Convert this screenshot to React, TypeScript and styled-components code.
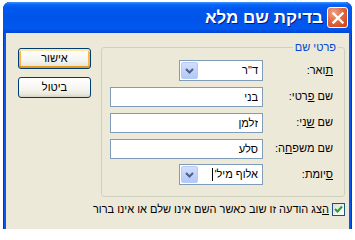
import React from 'react';
import styled, { createGlobalStyle } from 'styled-components';

const FONT = `"Liberation Sans", "DejaVu Sans", sans-serif`;

const Global = createGlobalStyle`
  html, body { margin: 0; padding: 0; background: #ffffff; }
  body {
    font-family: ${FONT};
    font-size: 11px;
    width: 355px;
    height: 229px;
    overflow: hidden;
    color: #000;
  }
  * { box-sizing: border-box; }
`;

const Window = styled.div`
  margin: 2px 0 0 3px;
  width: 349px;
  height: 240px;
  border-radius: 7px 7px 0 0;
  background: #0a55ea;
  box-shadow: inset 1px 0 0 #0831d9, inset -1px 0 0 #0831d9;
  overflow: hidden;
  display: flex;
  flex-direction: column;
`;

const TitleBar = styled.div`
  height: 31px;
  flex: none;
  direction: rtl;
  display: flex;
  align-items: center;
  gap: 4px;
  padding: 0 4px 0 0;
  background: linear-gradient(
    to bottom,
    #3d95ff 0%,
    #0a66f7 8%,
    #0058ee 20%,
    #0054e8 55%,
    #0058ef 85%,
    #0045d6 100%
  );
  border-radius: 7px 7px 0 0;
`;

const CloseButton = styled.div`
  width: 21px;
  height: 21px;
  border: 1px solid #ffffff;
  border-radius: 3px;
  background: radial-gradient(circle at 30% 25%, #f0a48a 0%, #e2683f 45%, #c9421a 100%);
  display: flex;
  align-items: center;
  justify-content: center;
`;

const TitleText = styled.div`
  font-family: ${FONT};
  font-weight: bold;
  font-size: 17px;
  color: #ffffff;
  text-shadow: 1px 1px 0 #0a1883;
  line-height: 20px;
`;

const Client = styled.div`
  flex: 1;
  margin: 0 3px;
  background: #ece9d8;
  direction: rtl;
  padding: 8px 4px 0 12px;
`;

const Top = styled.div`
  display: flex;
  align-items: flex-start;
  gap: 10px;
`;

const GroupBox = styled.fieldset`
  width: 244px;
  margin: 0;
  padding: 0 6px 11px 8px;
  border: 1px solid #d0d0bf;
  border-radius: 3px;
  min-inline-size: 0;
`;

const Legend = styled.legend`
  color: #0046d5;
  padding: 0 2px;
  line-height: 13px;
  font-size: 11px;
`;

const Fields = styled.div`
  display: grid;
  grid-template-columns: 70px 153px;
  grid-auto-rows: 21px;
  row-gap: 5px;
  padding-right: 5px;
  margin-top: 6px;
`;

const Label = styled.div`
  align-self: center;
  line-height: 13px;
  white-space: nowrap;
`;

const Cell = styled.div`
  display: flex;
  align-items: center;
`;

const TextBox = styled.input`
  width: 153px;
  height: 20px;
  border: 1px solid #7f9db9;
  background: #ffffff;
  padding: 0 4px;
  margin: 0;
  font-family: ${FONT};
  font-size: 11px;
  color: #000;
  direction: rtl;
  outline: none;
`;

const Combo = styled.div`
  width: 84px;
  height: 21px;
  border: 1px solid #7f9db9;
  background: #ffffff;
  display: flex;
  align-items: center;
  direction: rtl;
`;

const ComboText = styled.div`
  flex: 1;
  padding-right: 4px;
  line-height: 13px;
  white-space: nowrap;
  display: flex;
  align-items: center;
`;

const Caret = styled.span`
  display: inline-block;
  width: 1px;
  height: 13px;
  background: #000;
  margin-right: 1px;
`;

const DropButton = styled.div`
  width: 17px;
  height: 17px;
  margin: 0 1px 0 1px;
  border: 1px solid #b9cbf3;
  border-radius: 2px;
  background: linear-gradient(to bottom, #d3defc 0%, #c1d3fb 50%, #b4c8f6 100%);
  display: flex;
  align-items: center;
  justify-content: center;
`;

const ButtonColumn = styled.div`
  display: flex;
  flex-direction: column;
  gap: 8px;
  margin-top: 7px;
`;

const Button = styled.div<{ $default?: boolean }>`
  width: 73px;
  height: 21px;
  border: 1px solid #003c74;
  border-radius: 3px;
  background: linear-gradient(to bottom, #ffffff 0%, #f5f4ee 60%, #ebe8dc 85%, #d6d0c5 100%);
  display: flex;
  align-items: center;
  justify-content: center;
  line-height: 13px;
  box-shadow: ${(p) =>
    p.$default
      ? 'inset 0 2px 0 #ffe7a2, inset 0 -2px 0 #e5971f, inset 2px 0 0 #f9b64a, inset -2px 0 0 #f9b64a'
      : 'none'};
`;

const CheckRow = styled.div`
  display: flex;
  align-items: center;
  gap: 3px;
  margin-top: 6px;
`;

const CheckBox = styled.div`
  width: 13px;
  height: 13px;
  border: 1px solid #1c5180;
  background: linear-gradient(135deg, #dcdcd7 0%, #f3f3ef 60%, #ffffff 100%);
  display: flex;
  align-items: center;
  justify-content: center;
`;

const CheckLabel = styled.div`
  line-height: 13px;
  white-space: nowrap;
`;

const Chevron = () => (
  <svg width="9" height="6" viewBox="0 0 9 6">
    <path d="M1 1 L4.5 4.5 L8 1" fill="none" stroke="#4d6185" strokeWidth="2" />
  </svg>
);

const XIcon = () => (
  <svg width="12" height="12" viewBox="0 0 12 12">
    <path d="M1.5 1.5 L10.5 10.5 M10.5 1.5 L1.5 10.5" stroke="#ffffff" strokeWidth="2.4" strokeLinecap="square" />
  </svg>
);

const Check = () => (
  <svg width="9" height="9" viewBox="0 0 9 9">
    <path d="M1 4 L3.5 6.5 L8 1.5" fill="none" stroke="#21a121" strokeWidth="2" />
  </svg>
);

export default function App() {
  return (
    <>
      <Global />
      <Window>
        <TitleBar>
          <CloseButton>
            <XIcon />
          </CloseButton>
          <TitleText>בדיקת שם מלא</TitleText>
        </TitleBar>
        <Client>
          <Top>
            <GroupBox>
              <Legend>פרטי שם</Legend>
              <Fields>
                <Label>
                  <u>ת</u>ואר:
                </Label>
                <Cell>
                  <Combo>
                    <ComboText>ד"ר</ComboText>
                    <DropButton>
                      <Chevron />
                    </DropButton>
                  </Combo>
                </Cell>
                <Label>
                  שם <u>פ</u>רטי:
                </Label>
                <Cell>
                  <TextBox readOnly value="בני" />
                </Cell>
                <Label>
                  שם <u>ש</u>ני:
                </Label>
                <Cell>
                  <TextBox readOnly value="זלמן" />
                </Cell>
                <Label>
                  שם משפ<u>ח</u>ה:
                </Label>
                <Cell>
                  <TextBox readOnly value="סלע" />
                </Cell>
                <Label>
                  <u>ס</u>יומת:
                </Label>
                <Cell>
                  <Combo>
                    <ComboText>
                      אלוף מיל'
                      <Caret />
                    </ComboText>
                    <DropButton>
                      <Chevron />
                    </DropButton>
                  </Combo>
                </Cell>
              </Fields>
            </GroupBox>
            <ButtonColumn>
              <Button $default>אישור</Button>
              <Button>ביטול</Button>
            </ButtonColumn>
          </Top>
          <CheckRow>
            <CheckBox>
              <Check />
            </CheckBox>
            <CheckLabel>
              <u>ה</u>צג הודעה זו שוב כאשר השם אינו שלם או אינו ברור
            </CheckLabel>
          </CheckRow>
        </Client>
      </Window>
    </>
  );
}
